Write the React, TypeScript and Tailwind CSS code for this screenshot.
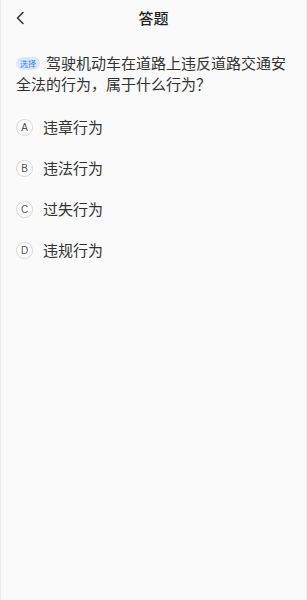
import React from "react";

const options = [
  { k: "A", t: "违章行为" },
  { k: "B", t: "违法行为" },
  { k: "C", t: "过失行为" },
  { k: "D", t: "违规行为" },
];

export default function App() {
  return (
    <div
      className="w-[307px] h-[600px] bg-[#fafafa] text-[#333] border-x border-[#ececec] overflow-hidden"
      style={{ fontFamily: '"Noto Sans CJK SC", "Noto Sans", sans-serif' }}
    >
      <div className="relative h-[37px] flex items-center justify-center">
        <svg className="absolute left-[14px] top-[11px]" width="12" height="14" viewBox="0 0 12 14">
          <path d="M8 1.5 L2.5 7 L8 12.5" fill="none" stroke="#333" strokeWidth="1.6" strokeLinecap="round" strokeLinejoin="round" />
        </svg>
        <span className="text-[15px] font-medium text-[#222]">答题</span>
      </div>
      <div className="px-[15px] pt-[15px] text-[15px] leading-[21px] text-[#333]">
        <span className="inline-block align-[2px] mr-[6px] px-[4px] h-[13px] leading-[13px] rounded-full bg-[#dbe9fd] text-[#3a7ff6] text-[8px]">
          选择
        </span>
        驾驶机动车在道路上违反道路交通安全法的行为，属于什么行为？
      </div>
      <div className="pt-[13px] flex flex-col">
        {options.map((o) => (
          <div key={o.k} className="h-[41px] flex items-center pl-[15px]">
            <div
              className="w-[17px] h-[17px] rounded-full border border-[#d6d6d6] bg-white flex items-center justify-center text-[10px] text-[#555]"
              style={{ fontFamily: '"Liberation Sans", sans-serif' }}
            >
              {o.k}
            </div>
            <span className="ml-[10px] text-[15px] text-[#333]">{o.t}</span>
          </div>
        ))}
      </div>
    </div>
  );
}
